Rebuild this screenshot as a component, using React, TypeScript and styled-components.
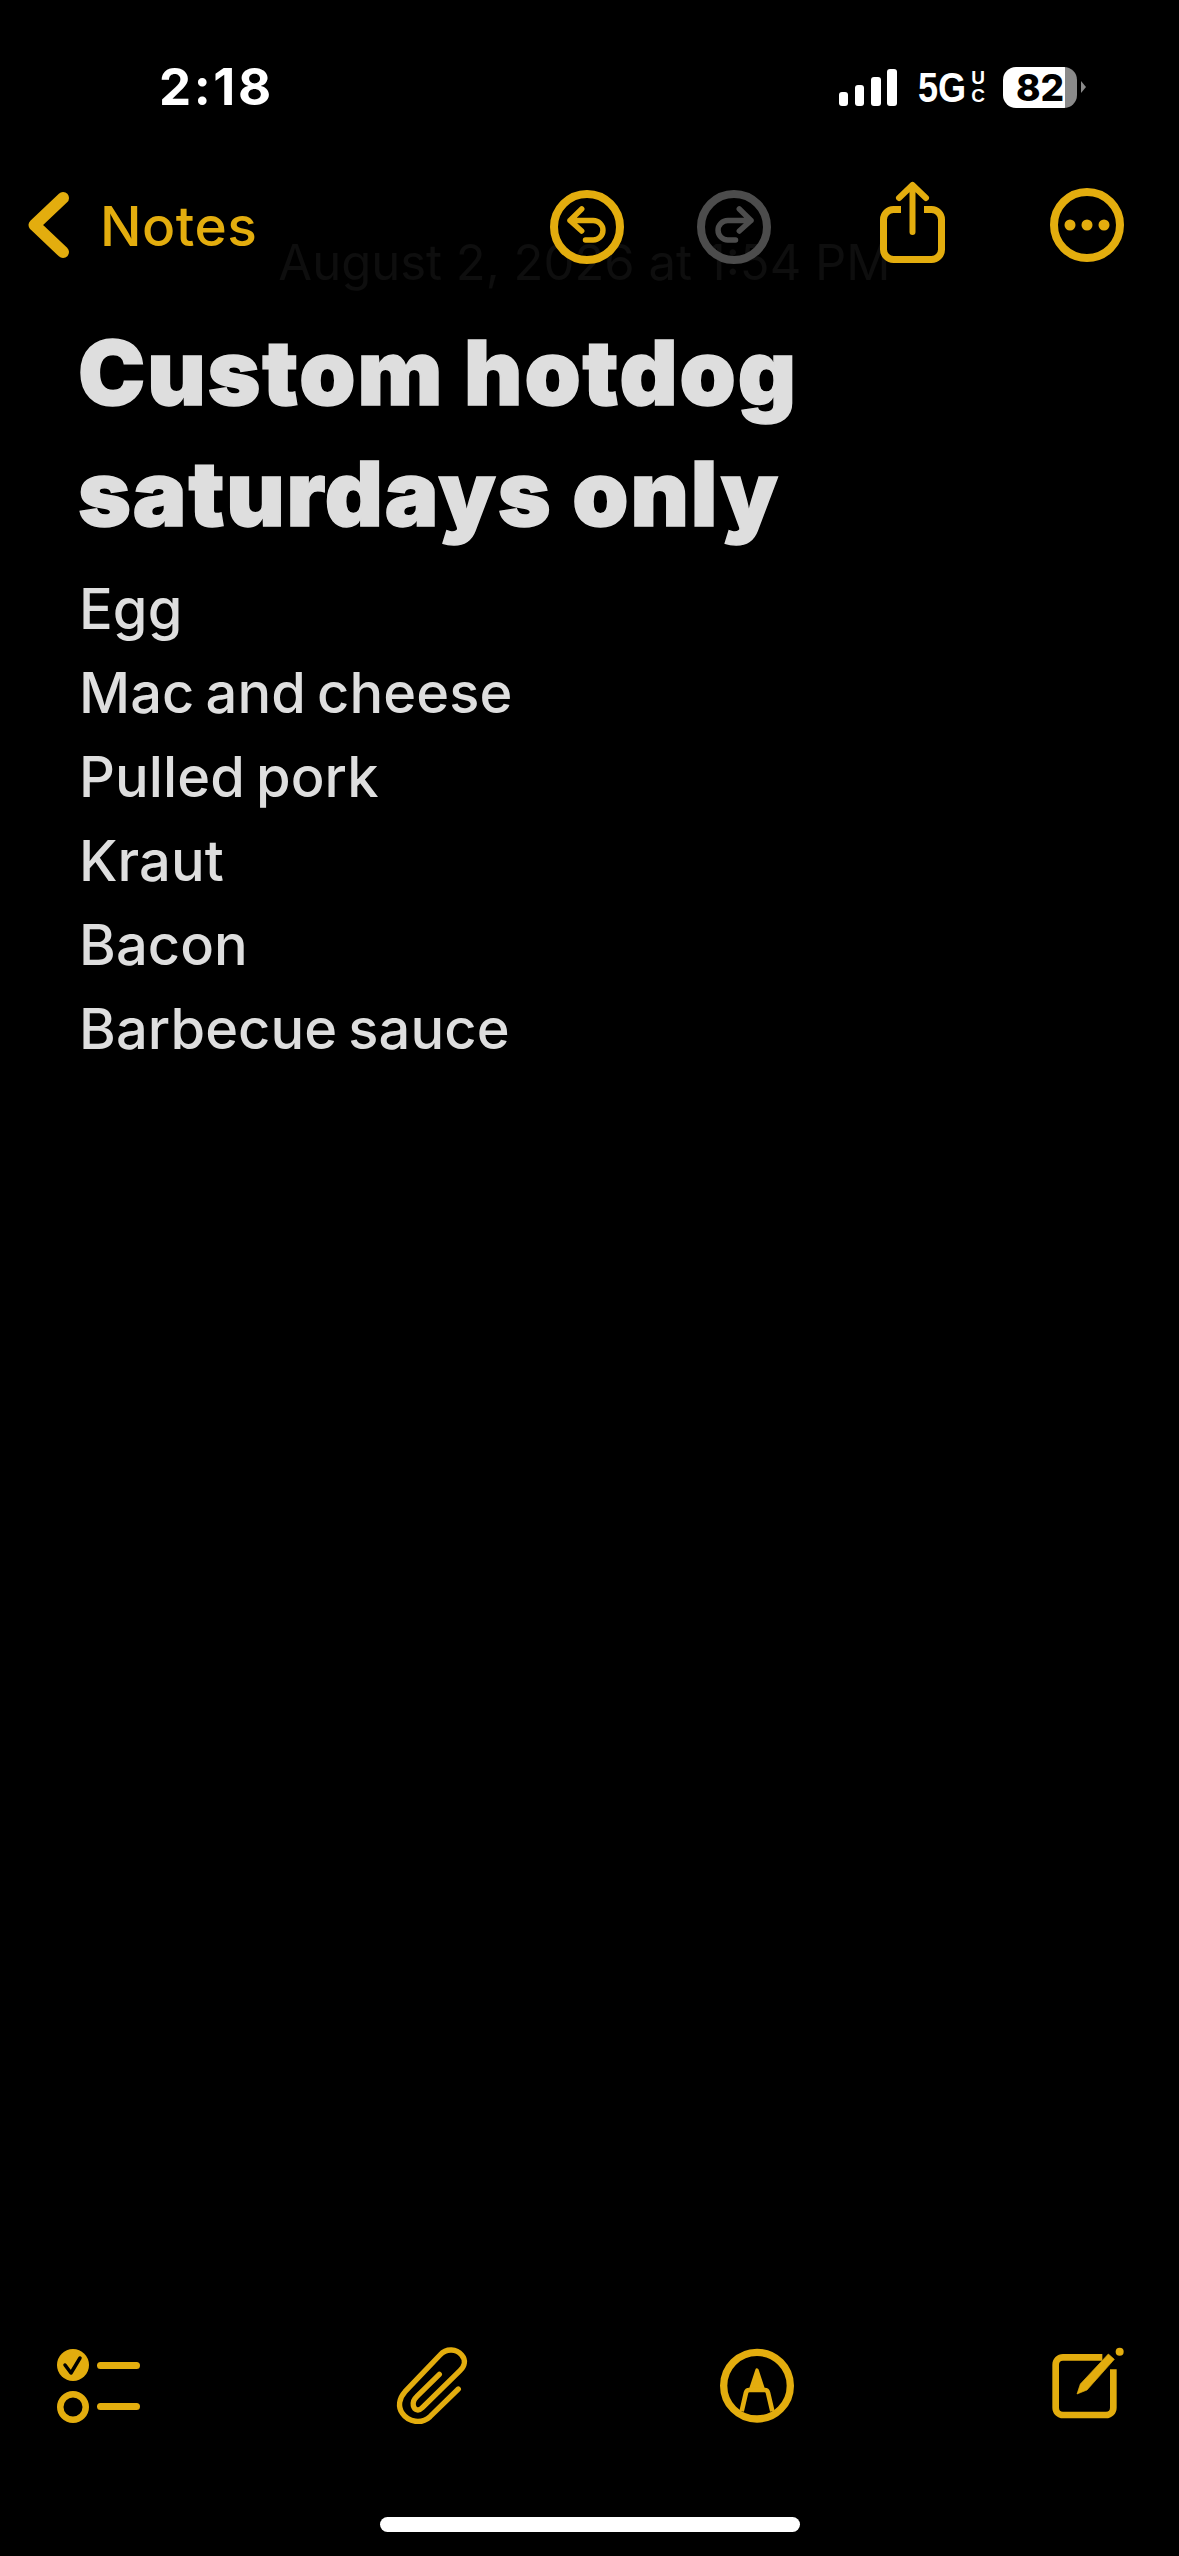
import React from "react";
import styled, { createGlobalStyle } from "styled-components";

const AMBER = "#e3ad0e";
const INK = "#dedede";

const Global = createGlobalStyle`
  html, body { margin: 0; padding: 0; background: #000; }
`;

const Page = styled.div`
  width: 1179px;
  height: 2556px;
  background: #000;
  display: flex;
  flex-direction: column;
  overflow: hidden;
  font-family: Inter, "Liberation Sans", sans-serif;
`;

const StatusBar = styled.header`
  height: 174px;
  padding: 0 93px 0 159px;
  display: flex;
  align-items: center;
  justify-content: space-between;
  box-sizing: border-box;
  flex: none;
`;

const Clock = styled.span`
  color: #fff;
  font-size: 51px;
  line-height: 60px;
  font-weight: 700;
  letter-spacing: 2.6px;
`;

const StatusGroup = styled.div`
  display: flex;
  align-items: center;
`;

const Network = styled.span`
  display: inline-block;
  margin-left: 21px;
  width: 48px;
  color: #fff;
  font-family: "Liberation Sans", sans-serif;
  font-weight: 700;
  font-size: 43px;
  line-height: 40px;
  transform: scaleX(0.84);
  transform-origin: left center;
`;

const NetworkStack = styled.span`
  display: flex;
  flex-direction: column;
  align-items: center;
  width: 18px;
  margin-left: 3px;
  color: #fff;
  font-family: "Liberation Sans", sans-serif;
  font-weight: 700;
  font-size: 19px;
  line-height: 18px;
`;

const Battery = styled.span`
  margin-left: 16px;
  width: 74px;
  height: 41px;
  border-radius: 13px;
  background: linear-gradient(to right, #fff 0, #fff 62px, #8a8a8a 62px, #8a8a8a 100%);
  color: #000;
  font-size: 37px;
  font-weight: 800;
  line-height: 41px;
  padding-left: 13px;
  box-sizing: border-box;
  letter-spacing: 0;
`;

const BatteryNub = styled.span`
  margin-left: 4px;
  width: 0;
  height: 0;
  border-top: 6px solid transparent;
  border-bottom: 6px solid transparent;
  border-left: 5px solid #8a8a8a;
`;

const NavBar = styled.nav`
  position: relative;
  z-index: 1;
  height: 96px;
  flex: none;
  display: flex;
  align-items: center;
  padding: 6px 52px 0 25px;
  box-sizing: border-box;
`;

const BackChevron = styled.svg`
  display: block;
  flex: none;
`;

const BackLabel = styled.span`
  color: ${AMBER};
  font-size: 55px;
  line-height: 90px;
  font-weight: 500;
  margin-left: 29px;
  letter-spacing: 0.5px;
  padding-top: 2px;
`;

const NavActions = styled.div`
  margin-left: auto;
  display: flex;
  align-items: center;
`;

const NavIcon = styled.svg<{ $gap?: number }>`
  display: block;
  height: 90px;
  flex: none;
  margin-left: ${(p) => p.$gap ?? 0}px;
`;

const Note = styled.main`
  flex: 1;
  margin-top: -37px;
  padding: 0 80px;
`;

const DateLine = styled.div`
  color: #0e0e0e;
  font-size: 49px;
  line-height: 60px;
  text-align: center;
  padding-right: 10px;
  white-space: nowrap;
`;

const Title = styled.h1`
  margin: 19px 0 0 -2px;
  color: ${INK};
  font-size: 90px;
  line-height: 121px;
  font-weight: 900;
  letter-spacing: 1.9px;
  -webkit-text-stroke: 1.5px ${INK};
`;

const ItemList = styled.div`
  margin: 13px 0 0 -1px;
`;

const Item = styled.p`
  margin: 0;
  color: ${INK};
  font-size: 56px;
  line-height: 84px;
  font-weight: 500;
  letter-spacing: 0.1px;
  word-spacing: -4px;
`;

const Toolbar = styled.footer`
  height: 90px;
  flex: none;
  padding: 0 51px 0 50px;
  display: flex;
  justify-content: space-between;
  align-items: center;
`;

const ToolIcon = styled.svg`
  display: block;
  height: 90px;
  flex: none;
`;

const HomeBar = styled.div`
  width: 420px;
  height: 15px;
  border-radius: 8px;
  background: #fff;
  margin: 87px auto 24px;
  flex: none;
`;

const items = ["Egg", "Mac and cheese", "Pulled pork", "Kraut", "Bacon", "Barbecue sauce"];

export default function App() {
  return (
    <Page>
      <Global />
      <StatusBar>
        <Clock>2:18</Clock>
        <StatusGroup>
          <svg width="58" height="37" viewBox="0 0 58 37" fill="#fff">
            <rect x="0" y="23" width="9" height="14" rx="3" />
            <rect x="16" y="16" width="9" height="21" rx="3" />
            <rect x="32" y="8" width="10" height="29" rx="3" />
            <rect x="48" y="0" width="10" height="37" rx="3" />
          </svg>
          <Network>5G</Network>
          <NetworkStack>
            <span>U</span>
            <span>C</span>
          </NetworkStack>
          <Battery>82</Battery>
          <BatteryNub />
        </StatusGroup>
      </StatusBar>

      <NavBar>
        <BackChevron width="46" height="90" viewBox="0 0 46 90" fill="none" stroke={AMBER} strokeWidth="12" strokeLinecap="round" strokeLinejoin="round">
          <path d="M38 18 L9.5 45 L38 72" />
        </BackChevron>
        <BackLabel>Notes</BackLabel>
        <NavActions>
          <NavIcon width="80" viewBox="0 0 80 90" fill="none" stroke={AMBER}>
            <circle cx="40" cy="47" r="33" strokeWidth="8" />
            <path d="M34.7 29 L23 40.5 L34.7 51 M23 40.5 H46.2 A9.75 9.75 0 0 1 46.2 60 H38.5" strokeWidth="5.5" strokeLinecap="round" strokeLinejoin="round" />
          </NavIcon>
          <NavIcon $gap={67} width="80" viewBox="0 0 80 90" fill="none" stroke="#4c4c4c">
            <circle cx="40" cy="47" r="33" strokeWidth="8" />
            <path d="M45.3 29 L57 40.5 L45.3 51 M57 40.5 H33.8 A9.75 9.75 0 0 0 33.8 60 H41.5" strokeWidth="5.5" strokeLinecap="round" strokeLinejoin="round" />
          </NavIcon>
          <NavIcon $gap={103} width="70" viewBox="0 0 70 90" fill="none" stroke={AMBER} strokeLinecap="round" strokeLinejoin="round">
            <path d="M24 29.5 H16.5 A10 10 0 0 0 6.5 39.5 V69.5 A10 10 0 0 0 16.5 79.5 H54.5 A10 10 0 0 0 64.5 69.5 V39.5 A10 10 0 0 0 54.5 29.5 H47" strokeWidth="7" strokeLinecap="butt" />
            <path d="M35.5 52 V6 M22 18 L35.5 5 L49 18" strokeWidth="6" />
          </NavIcon>
          <NavIcon $gap={100} width="80" viewBox="0 0 80 90" fill="none">
            <circle cx="40" cy="45" r="33" stroke={AMBER} strokeWidth="8" />
            <circle cx="23" cy="45" r="5.5" fill={AMBER} />
            <circle cx="40" cy="45" r="5.5" fill={AMBER} />
            <circle cx="57" cy="45" r="5.5" fill={AMBER} />
          </NavIcon>
        </NavActions>
      </NavBar>

      <Note>
        <DateLine>August 2, 2026 at 1:54 PM</DateLine>
        <Title>
          Custom hotdog
          <br />
          saturdays only
        </Title>
        <ItemList>
          {items.map((t) => (
            <Item key={t}>{t}</Item>
          ))}
        </ItemList>
      </Note>

      <Toolbar>
        <ToolIcon width="95" viewBox="0 0 95 90" fill="none">
          <circle cx="23" cy="25" r="16" fill={AMBER} />
          <path d="M15 25 L21 33 L30 18" stroke="#000" strokeWidth="3.5" strokeLinecap="round" strokeLinejoin="round" />
          <circle cx="23" cy="67" r="12.75" stroke={AMBER} strokeWidth="6.5" />
          <path d="M50.5 25.5 H86.5 M50.5 66.5 H86.5" stroke={AMBER} strokeWidth="7" strokeLinecap="round" />
        </ToolIcon>
        <ToolIcon width="80" viewBox="21 15 240 270" fill="none" stroke={AMBER} strokeWidth="16" strokeLinecap="round" strokeLinejoin="round">
          <path d="M220 162 L135 245 C110 268 70 262 52 235 C38 215 42 190 60 170 L165 60 C185 38 215 42 230 60 C243 75 240 92 225 107 L112 218 C100 230 88 225 85 212 C83 200 87 192 95 185 L163 118" />
        </ToolIcon>
        <ToolIcon width="82" viewBox="27 0 246 270" fill="none">
          <circle cx="141" cy="137" r="100" stroke={AMBER} strokeWidth="22" />
          <path d="M141 90 L160 148 H122 Z" fill={AMBER} stroke={AMBER} strokeWidth="10" strokeLinejoin="round" />
          <path d="M187 214 L174 158 Q172 150 164 150 H118 Q110 150 108 158 L95 214" stroke={AMBER} strokeWidth="14" />
        </ToolIcon>
        <ToolIcon width="80" viewBox="9 0 240 270" fill="none">
          <path d="M172 52 H54 A22 22 0 0 0 32 74 V203 A22 22 0 0 0 54 225 H183 A22 22 0 0 0 205 203 V88" stroke={AMBER} strokeWidth="20" strokeLinecap="butt" />
          <path d="M96 162 L106 132 L190 42 L208 58 L126 150 Z" fill={AMBER} stroke={AMBER} strokeWidth="2" strokeLinejoin="round" />
          <circle cx="224" cy="35" r="12" fill={AMBER} />
        </ToolIcon>
      </Toolbar>

      <HomeBar />
    </Page>
  );
}
